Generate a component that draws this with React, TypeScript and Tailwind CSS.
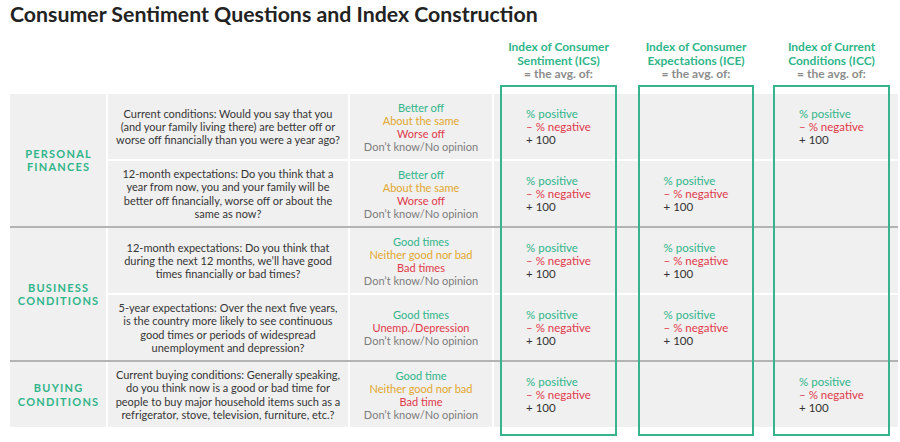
import React from 'react';

type Tone = 'g' | 'y' | 'r' | 'n';

type Row = {
  q: string[];
  a: [string, Tone][];
  idx: [boolean, boolean, boolean];
};

type Group = {
  label: string[];
  rows: Row[];
};

const toneClass: Record<Tone, string> = {
  g: 'text-[#2fb58a]',
  y: 'text-[#e2a72e]',
  r: 'text-[#e1394a]',
  n: 'text-[#7d7d7d]',
};

const dk: [string, Tone] = ['Don’t know/No opinion', 'n'];

const groups: Group[] = [
  {
    label: ['PERSONAL', 'FINANCES'],
    rows: [
      {
        q: [
          'Current conditions: Would you say that you',
          '(and your family living there) are better off or',
          'worse off financially than you were a year ago?',
        ],
        a: [['Better off', 'g'], ['About the same', 'y'], ['Worse off', 'r'], dk],
        idx: [true, false, true],
      },
      {
        q: [
          '12-month expectations: Do you think that a',
          'year from now, you and your family will be',
          'better off financially, worse off or about the',
          'same as now?',
        ],
        a: [['Better off', 'g'], ['About the same', 'y'], ['Worse off', 'r'], dk],
        idx: [true, true, false],
      },
    ],
  },
  {
    label: ['BUSINESS', 'CONDITIONS'],
    rows: [
      {
        q: [
          '12-month expectations: Do you think that',
          'during the next 12 months, we’ll have good',
          'times financially or bad times?',
        ],
        a: [['Good times', 'g'], ['Neither good nor bad', 'y'], ['Bad times', 'r'], dk],
        idx: [true, true, false],
      },
      {
        q: [
          '5-year expectations: Over the next five years,',
          'is the country more likely to see continuous',
          'good times or periods of widespread',
          'unemployment and depression?',
        ],
        a: [['Good times', 'g'], ['Unemp./Depression', 'r'], dk],
        idx: [true, true, false],
      },
    ],
  },
  {
    label: ['BUYING', 'CONDITIONS'],
    rows: [
      {
        q: [
          'Current buying conditions: Generally speaking,',
          'do you think now is a good or bad time for',
          'people to buy major household items such as a',
          'refrigerator, stove, television, furniture, etc.?',
        ],
        a: [['Good time', 'g'], ['Neither good nor bad', 'y'], ['Bad time', 'r'], dk],
        idx: [true, false, true],
      },
    ],
  },
];

const indexHeads = [
  ['Index of Consumer', 'Sentiment (ICS)'],
  ['Index of Consumer', 'Expectations (ICE)'],
  ['Index of Current', 'Conditions (ICC)'],
];

// widths of the three index columns and the gaps before them
const slotClass = ['ml-[6px] w-[117px]', 'ml-[21px] w-[116px]', 'ml-[19px] w-[117px]'];

function Formula() {
  return (
    <div className="text-[11.5px] leading-[13px] text-left">
      <p className="text-[#2fb58a]">% positive</p>
      <p className="text-[#e1394a]">– % negative</p>
      <p className="text-[#333]">+ 100</p>
    </div>
  );
}

function TableRow({ row }: { row: Row }) {
  return (
    <div className="grid grid-cols-[240px_142px_404px] gap-x-[2px] h-[65px]">
      <div className="bg-[#f0f0f0] flex flex-col items-center justify-center text-[11px] leading-[13.3px] text-[#363636] text-center">
        {row.q.map((line) => (
          <p key={line} className="whitespace-nowrap">{line}</p>
        ))}
      </div>
      <div className="bg-[#f0f0f0] flex flex-col items-center justify-center text-[11px] leading-[13px] text-center">
        {row.a.map(([text, tone]) => (
          <p key={text} className={toneClass[tone]}>{text}</p>
        ))}
      </div>
      <div className="bg-[#f0f0f0] flex">
        {row.idx.map((on, i) => (
          <div key={i} className={`${slotClass[i]} flex items-center justify-center`}>
            {on && <Formula />}
          </div>
        ))}
      </div>
    </div>
  );
}

export default function App() {
  return (
    <div className="w-[900px] h-[442px] bg-white overflow-hidden font-['Lato',sans-serif]">
      {/* Title */}
      <div className="h-[34px] pl-[10px]">
        <h1 className="text-[21.3px] leading-[28px] font-bold text-[#222]">
          Consumer Sentiment Questions and Index Construction
        </h1>
      </div>

      {/* Index headings */}
      <div className="h-[60px] flex pl-[494px] pt-[6px]">
        {indexHeads.map((lines, i) => (
          <div key={i} className={`${slotClass[i]} text-center text-[12px] leading-[13.5px] font-bold`}>
            <p className="text-[#2fb58a] whitespace-nowrap">{lines[0]}</p>
            <p className="text-[#2fb58a] whitespace-nowrap">{lines[1]}</p>
            <p className="text-[#8c8c8c]">= the avg. of:</p>
          </div>
        ))}
      </div>

      {/* Table body */}
      <div className="relative ml-[10px] w-[888px]">
        {groups.map((group, gi) => (
          <div
            key={group.label[0]}
            className={`grid grid-cols-[96px_786px] gap-x-[2px] bg-white ${gi > 0 ? 'border-t-2 border-[#b3b3b3]' : ''}`}
          >
            <div className="bg-[#f0f0f0] flex flex-col items-center justify-center text-[11px] leading-[13.5px] font-bold tracking-[0.11em] text-[#2fb58a]">
              {group.label.map((l) => (
                <p key={l} className="pl-[0.11em]">{l}</p>
              ))}
            </div>
            <div className="flex flex-col gap-y-[2px]">
              {group.rows.map((row, ri) => (
                <TableRow key={ri} row={row} />
              ))}
            </div>
          </div>
        ))}

        {/* Index outlines laid over the rows */}
        <div className="absolute left-[484px] -top-[9px] -bottom-[9px] flex pointer-events-none">
          {slotClass.map((c) => (
            <div key={c} className={`${c} h-full border-2 border-[#37b48e]`} />
          ))}
        </div>
      </div>
    </div>
  );
}
